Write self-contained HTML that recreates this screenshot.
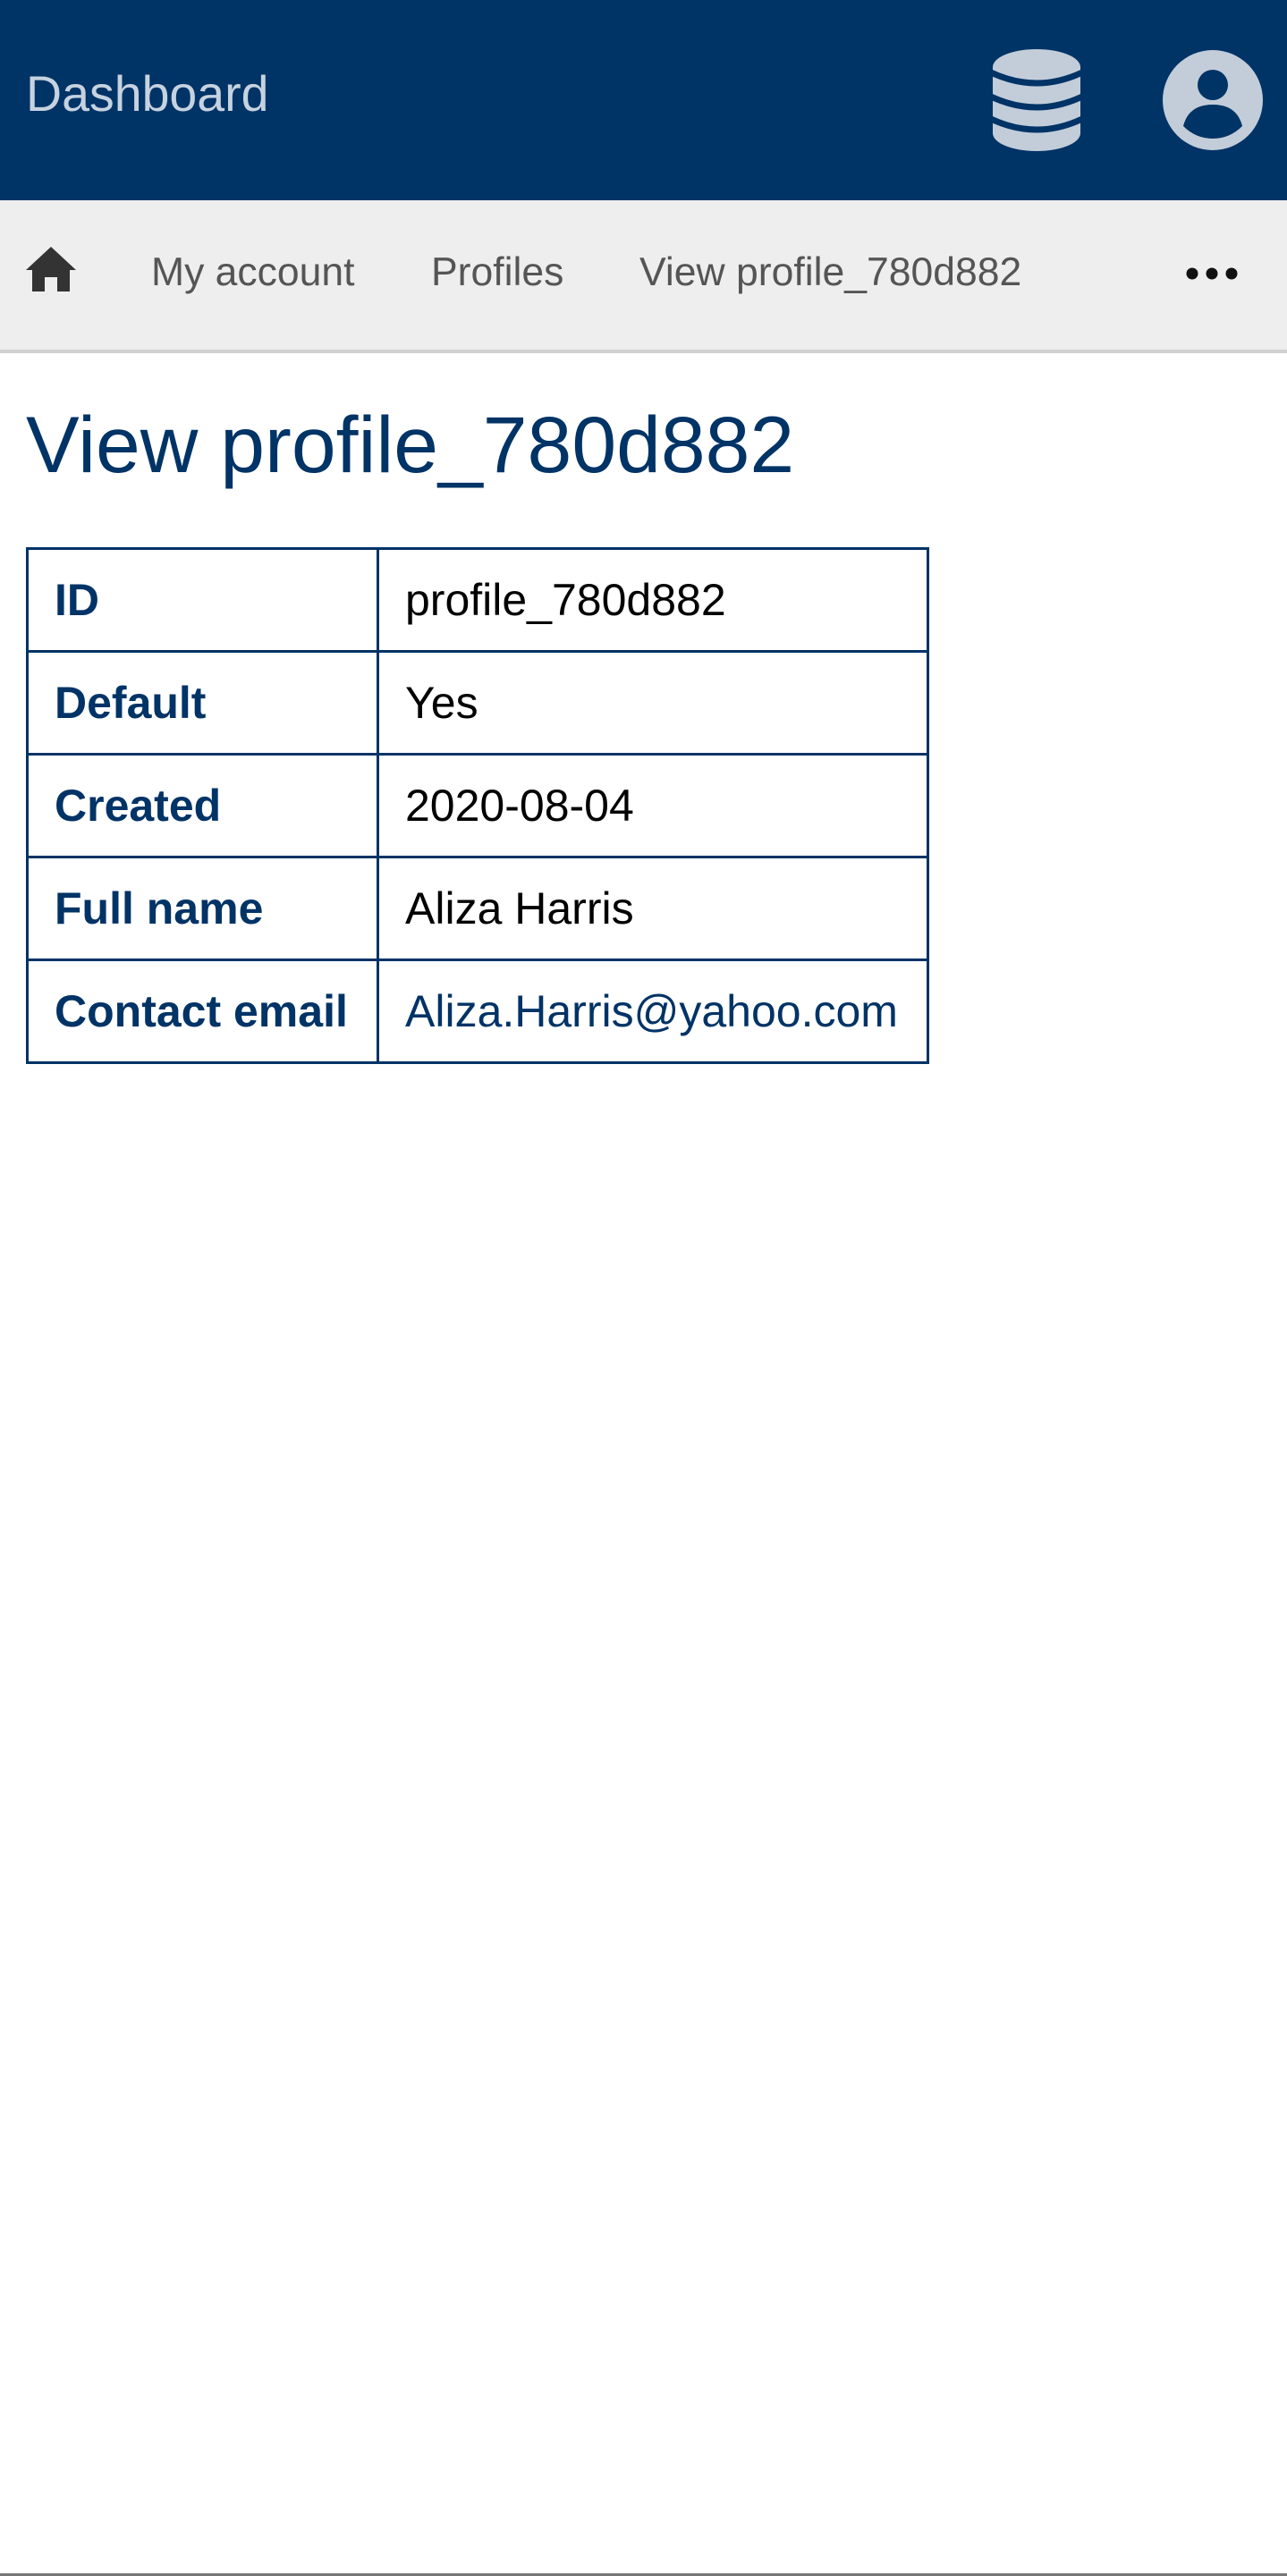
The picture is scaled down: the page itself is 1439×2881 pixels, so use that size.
<!DOCTYPE html>
<html><head><meta charset="utf-8"><style>
*{margin:0;padding:0;box-sizing:border-box}
body{width:1439px;height:2881px;background:#fff;font-family:"Liberation Sans",Arial,sans-serif;position:relative;overflow:hidden}
.hdr{position:absolute;left:0;top:0;width:1439px;height:224px;background:#003366}
.brand{position:absolute;left:29px;top:72px;font-size:55.5px;line-height:66px;color:#c6d2e0}
.nav{position:absolute;left:0;top:224px;width:1439px;height:171px;background:#eeeeee;border-bottom:4px solid #d0d0d0}
.title{position:absolute;left:29px;top:445px;font-size:89.5px;line-height:104px;color:#003366}
table{position:absolute;left:29px;top:612px;border-collapse:collapse;width:1010px}
td{border:3px solid #003366;height:115px;font-size:50px;padding:0 0 0 29px;vertical-align:middle;white-space:nowrap}
td.k{width:392px;font-weight:bold;color:#003366}
td.v{color:#000}
a{color:#003366;text-decoration:none}
.bot{position:absolute;left:0;top:2878px;width:1439px;height:3px;background:#777}
.n{position:absolute;top:278px;font-size:44.5px;line-height:54px;color:#555}
</style></head><body>
<div class="hdr">
<div class="brand">Dashboard</div>
<svg style="position:absolute;left:1110px;top:55px" width="98" height="114" viewBox="0 0 98 114">
<rect x="0" y="0" width="98" height="114" rx="49" ry="20" fill="#c2cdd9"/>
<g fill="none" stroke="#003366" stroke-width="7">
<path d="M-2 26 Q49 50 100 26"/>
<path d="M-2 53 Q49 77 100 53"/>
<path d="M-2 78 Q49 102 100 78"/>
</g></svg>
<svg style="position:absolute;left:1299px;top:55px" width="114" height="114" viewBox="0 0 114 114">
<circle cx="57" cy="57" r="56" fill="#c2cdd9"/>
<circle cx="57" cy="40" r="17" fill="#003366"/>
<path d="M24 86 Q30 62 57 62 Q84 62 90 86 Q76 100 57 100 Q38 100 24 86Z" fill="#003366"/>
</svg>
</div>
<div class="nav"></div>
<svg style="position:absolute;left:29px;top:276px" width="56" height="50" viewBox="0 0 56 50">
<path d="M28 0 L56 26 L49 26 L49 50 L35 50 L35 34 L21 34 L21 50 L7 50 L7 26 L0 26Z" fill="#333"/>
</svg>
<span class="n" style="left:169px">My account</span>
<span class="n" style="left:482px">Profiles</span>
<span class="n" style="left:715px">View profile_780d882</span>
<svg style="position:absolute;left:1325px;top:296px" width="60" height="20" viewBox="0 0 60 20">
<circle cx="8" cy="10" r="6.5" fill="#111"/><circle cx="30" cy="10" r="6.5" fill="#111"/><circle cx="52" cy="10" r="6.5" fill="#111"/>
</svg>
<div class="title">View profile_780d882</div>
<table>
<tr><td class="k">ID</td><td class="v">profile_780d882</td></tr>
<tr><td class="k">Default</td><td class="v">Yes</td></tr>
<tr><td class="k">Created</td><td class="v">2020-08-04</td></tr>
<tr><td class="k">Full name</td><td class="v">Aliza Harris</td></tr>
<tr><td class="k">Contact email</td><td class="v"><a>Aliza.Harris@yahoo.com</a></td></tr>
</table>
<div class="bot"></div>
</body></html>
